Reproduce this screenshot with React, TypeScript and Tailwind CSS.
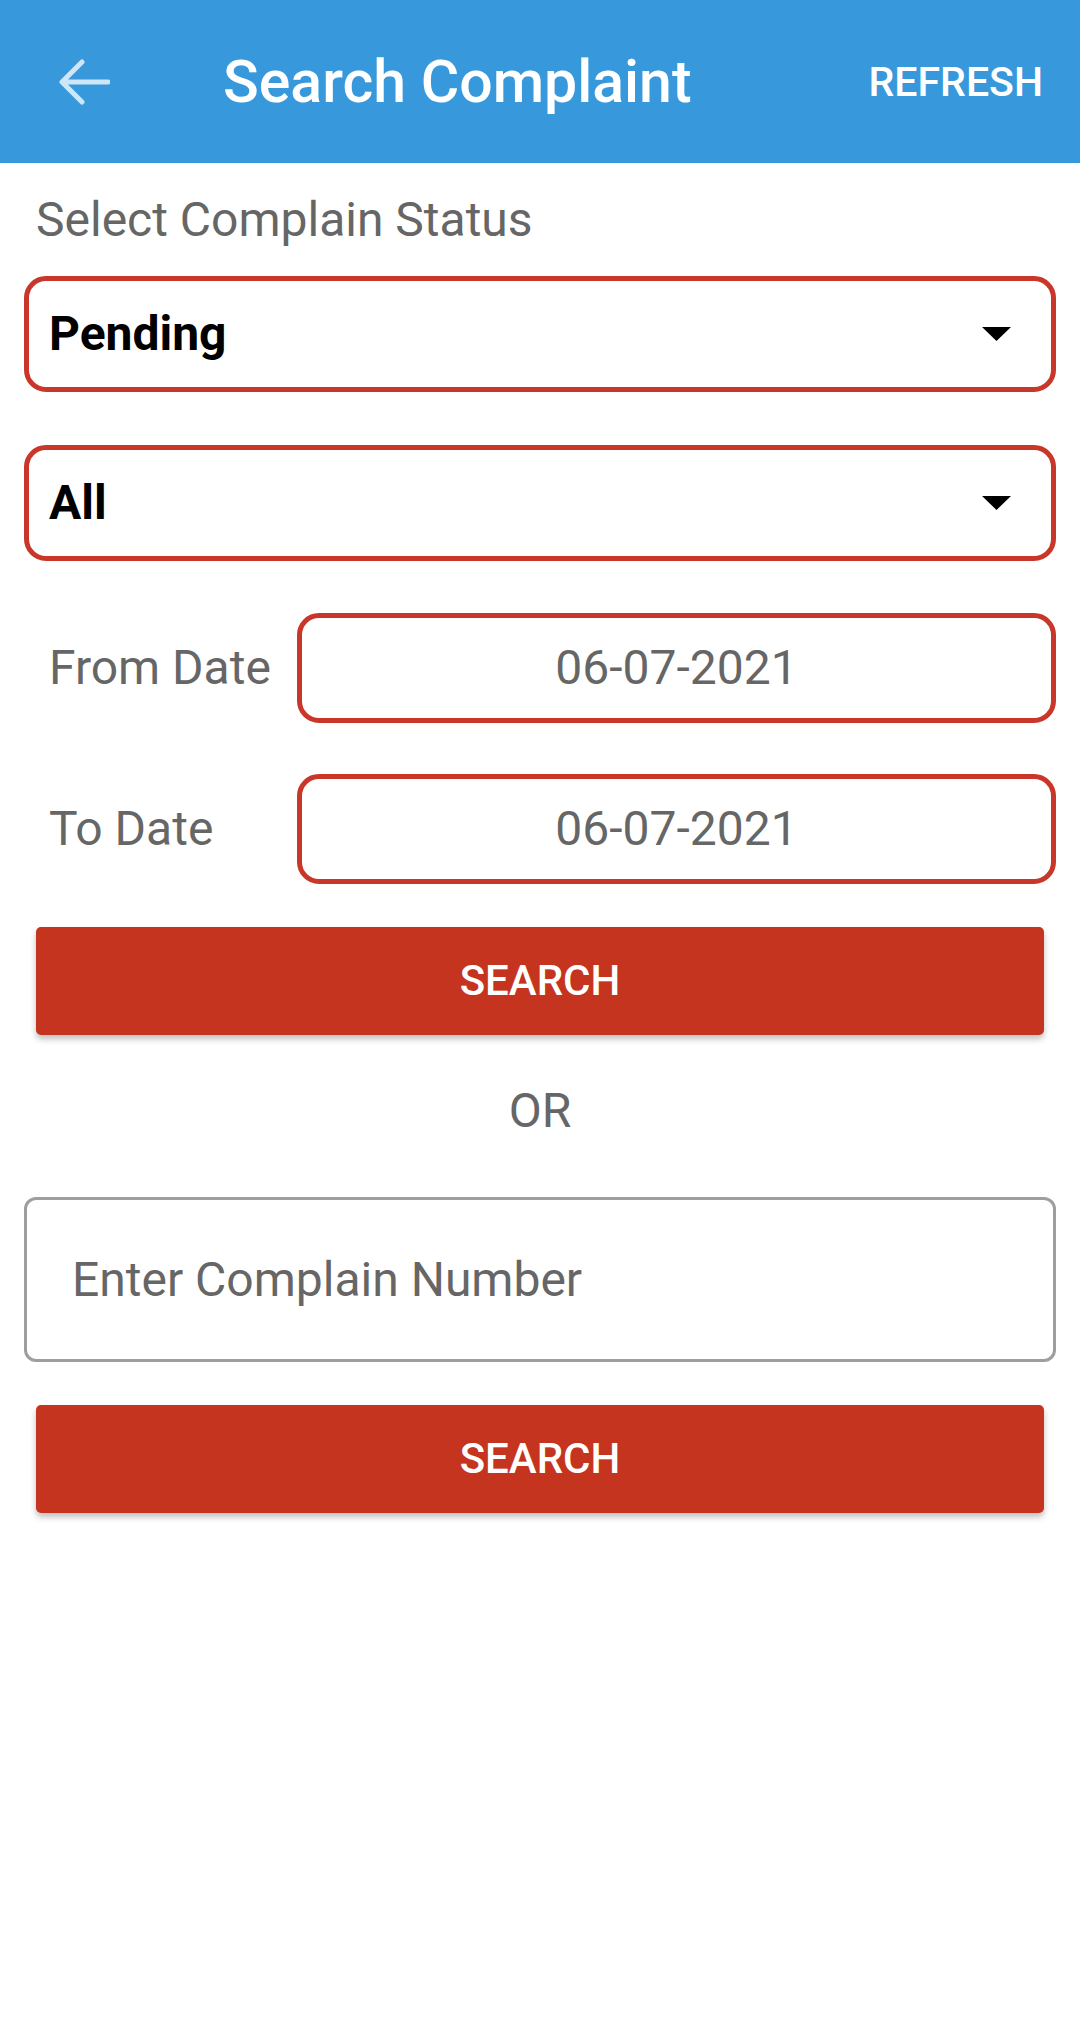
function Caret() {
  return (
    <svg width="29" height="14" viewBox="0 0 29 14" aria-hidden="true">
      <path d="M0 0 H29 L14.5 14 Z" fill="#000" />
    </svg>
  );
}

function Select({ value }: { value: string }) {
  return (
    <div className="flex h-[116px] items-center justify-between rounded-[22px] border-[5px] border-[#C8372A] bg-white pl-[20px] pr-[40px]">
      <span className="text-[48px] font-bold text-black">{value}</span>
      <Caret />
    </div>
  );
}

function DateRow({ label, value }: { label: string; value: string }) {
  return (
    <div className="flex items-center">
      <span className="w-[273px] pl-[25px] text-[48px] text-[#666]">{label}</span>
      <div className="flex h-[110px] flex-1 items-center justify-center rounded-[22px] border-[5px] border-[#C8372A] text-[48px] text-[#666]">
        {value}
      </div>
    </div>
  );
}

function SearchButton() {
  return (
    <button className="mx-[12px] flex h-[108px] items-center justify-center rounded-[5px] bg-[#C5341F] text-[42px] font-medium text-white shadow-[0_4px_6px_rgba(0,0,0,0.25)]">
      SEARCH
    </button>
  );
}

export default function App() {
  return (
    <div className="min-h-[2030px] bg-white font-['Roboto',sans-serif] leading-[56px]">
      <header className="flex h-[163px] items-center bg-[#3799DB] pl-[58px] pr-[37px]">
        <svg width="52" height="52" viewBox="0 0 52 52" aria-hidden="true">
          <path
            d="M50 26 H6 M24 6 L4 26 L24 46"
            fill="none"
            stroke="#CDE6F8"
            strokeWidth="5"
            strokeLinecap="round"
            strokeLinejoin="round"
          />
        </svg>
        <h1 className="ml-[113px] flex-1 text-[59px] font-medium text-white">Search Complaint</h1>
        <span className="text-[41px] font-medium text-white">REFRESH</span>
      </header>

      <main className="flex flex-col px-[24px]">
        <p className="mt-[29px] pl-[12px] text-[48px] text-[#666]">Select Complain Status</p>
        <div className="mt-[28px]">
          <Select value="Pending" />
        </div>
        <div className="mt-[53px]">
          <Select value="All" />
        </div>
        <div className="mt-[52px]">
          <DateRow label="From Date" value="06-07-2021" />
        </div>
        <div className="mt-[51px]">
          <DateRow label="To Date" value="06-07-2021" />
        </div>
        <div className="mt-[43px] flex flex-col">
          <SearchButton />
        </div>
        <p className="mt-[48px] text-center text-[48px] text-[#666]">OR</p>
        <input
          className="mt-[58px] h-[165px] rounded-[12px] border-[3px] border-[#9E9E9E] pl-[45px] text-[48px] text-black outline-none placeholder:text-[#666]"
          placeholder="Enter Complain Number"
        />
        <div className="mt-[43px] flex flex-col">
          <SearchButton />
        </div>
      </main>
    </div>
  );
}
